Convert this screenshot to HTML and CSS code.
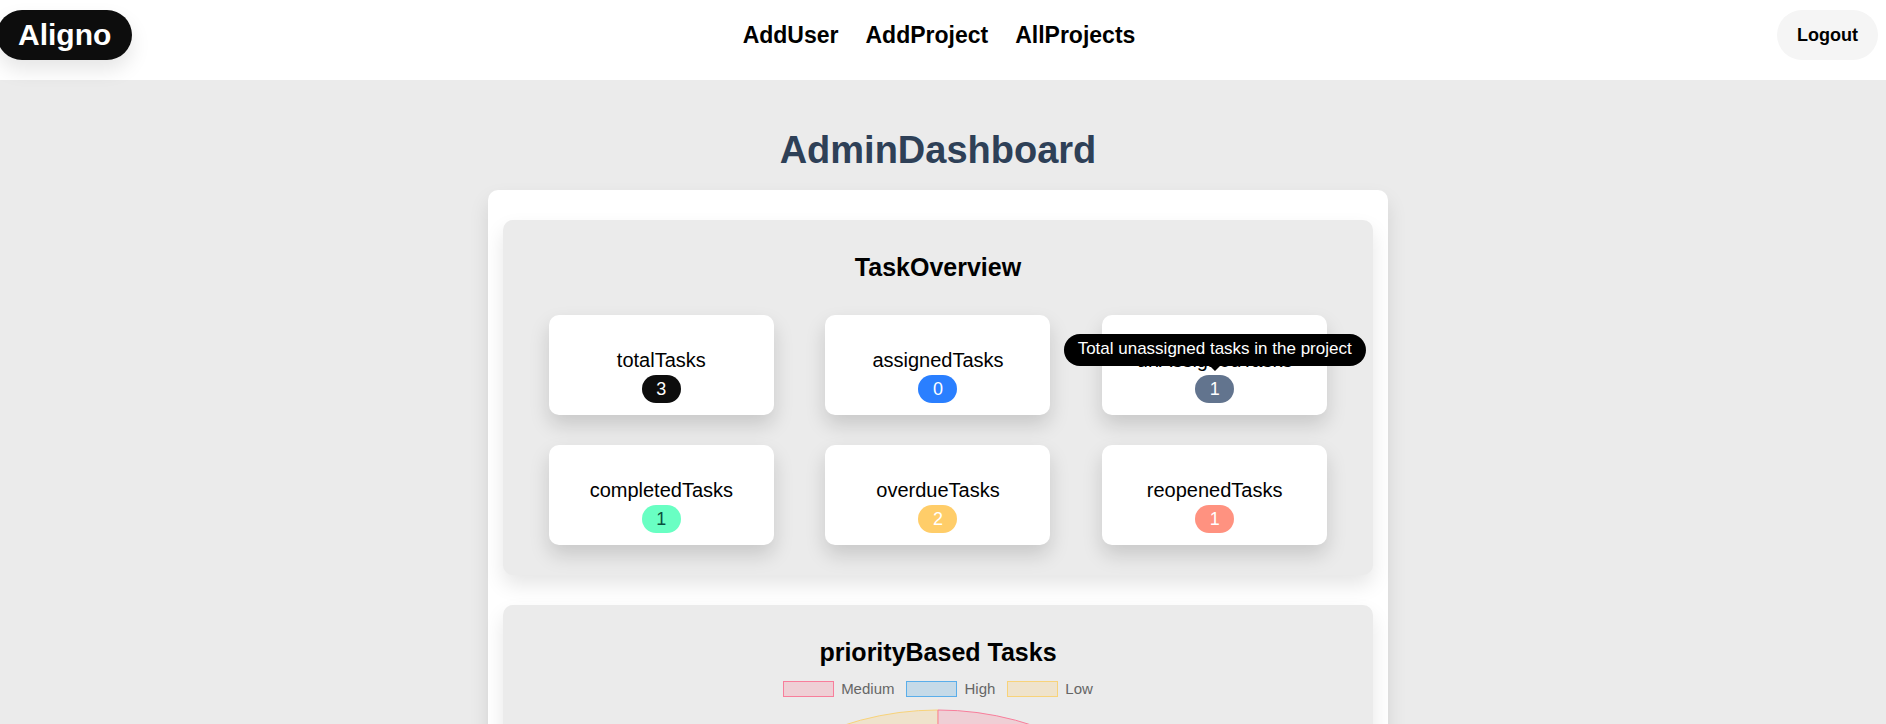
FILE: index.html
```html
<!DOCTYPE html>
<html lang="en">
<head>
<meta charset="utf-8">
<meta name="viewport" content="width=device-width, initial-scale=1">
<title>Aligno</title>
<link rel="stylesheet" href="styles.css">
</head>
<body>
<header class="topbar">
  <a class="logo" href="#">Aligno</a>
  <nav class="nav">
    <a href="#">AddUser</a>
    <a href="#">AddProject</a>
    <a href="#">AllProjects</a>
  </nav>
  <button class="logout" type="button">Logout</button>
</header>
<main class="page">
  <h1 class="page-title">AdminDashboard</h1>
  <div class="panel">
    <section class="section">
      <h2 class="section-title">TaskOverview</h2>
      <div class="cards">
        <div class="card"><p class="card-label">totalTasks</p><span class="badge badge-total">3</span></div>
        <div class="card"><p class="card-label">assignedTasks</p><span class="badge badge-assigned">0</span></div>
        <div class="card"><p class="card-label">unAssignedTasks</p><span class="badge badge-unassigned" aria-describedby="unassigned-tip">1<span class="tooltip" id="unassigned-tip" role="tooltip">Total unassigned tasks in the project</span></span></div>
        <div class="card"><p class="card-label">completedTasks</p><span class="badge badge-completed">1</span></div>
        <div class="card"><p class="card-label">overdueTasks</p><span class="badge badge-overdue">2</span></div>
        <div class="card"><p class="card-label">reopenedTasks</p><span class="badge badge-reopened">1</span></div>
      </div>
    </section>
    <section class="section section-chart">
      <h2 class="section-title">priorityBased Tasks</h2>
      <ul class="legend">
        <li><span class="swatch swatch-medium"></span>Medium</li>
        <li><span class="swatch swatch-high"></span>High</li>
        <li><span class="swatch swatch-low"></span>Low</li>
      </ul>
      <svg class="pie" viewBox="0 0 600 600" role="img" aria-label="Tasks by priority">
        <path class="slice-low" d="M300 300 L41 449.500 A299 299 0 0 1 300 1 Z"/>
        <path class="slice-high" d="M300 300 L559 449.500 A299 299 0 0 1 41 449.500 Z"/>
        <path class="slice-medium" d="M300 300 L300 1 A299 299 0 0 1 559 449.500 Z"/>
      </svg>
    </section>
  </div>
</main>
</body>
</html>
```
FILE: styles.css
```css
* {
  box-sizing: border-box;
}

body {
  margin: 0;
  background: #ebebeb;
  color: #000;
  font-family: "Liberation Sans", Arial, sans-serif;
}

h1, h2, p, ul {
  margin: 0;
  padding: 0;
}

.topbar {
  display: grid;
  grid-template-columns: 1fr auto 1fr;
  align-items: start;
  height: 80px;
  padding: 10px 8px 0 0;
  background: #fff;
}

.logo {
  justify-self: start;
  margin-left: -3px;
  padding: 0 21px;
  border-radius: 25px;
  background: #0d0d0d;
  box-shadow: 0 10px 20px rgba(0, 0, 0, 0.1);
  color: #fff;
  font-size: 30px;
  font-weight: 700;
  line-height: 50px;
  text-decoration: none;
}

.nav {
  display: flex;
  gap: 27px;
}

.nav a {
  color: #000;
  font-size: 23px;
  font-weight: 700;
  line-height: 50px;
  text-decoration: none;
}

.logout {
  justify-self: end;
  height: 50px;
  padding: 0 20px;
  border: 0;
  border-radius: 25px;
  background: #f5f5f5;
  color: #000;
  font-family: inherit;
  font-size: 18px;
  font-weight: 700;
}

.page {
  padding: 50px 10px 50px 0;
}

.page-title {
  margin-bottom: 20px;
  color: #2e4057;
  font-size: 38px;
  line-height: 40px;
  text-align: center;
}

.panel {
  display: grid;
  gap: 30px;
  max-width: 900px;
  margin: 0 auto;
  padding: 30px 15px;
  border-radius: 10px;
  background: #fff;
  box-shadow: 0 10px 20px rgba(0, 0, 0, 0.1);
}

.section {
  padding: 30px 20px;
  border-radius: 10px;
  background: #ebebeb;
  box-shadow: 0 10px 20px rgba(0, 0, 0, 0.1);
  text-align: center;
}

.section-title {
  font-size: 25px;
  line-height: 35px;
}

.cards {
  display: grid;
  grid-template-columns: repeat(3, 1fr);
  gap: 30px 0;
  justify-items: center;
  margin-top: 30px;
}

.card {
  width: 225px;
  padding: 30px 0 12px;
  border-radius: 10px;
  background: #fff;
  box-shadow: 0 10px 20px rgba(0, 0, 0, 0.15);
}

.card-label {
  font-size: 20px;
  line-height: 30px;
}

.badge {
  display: block;
  position: relative;
  width: 39px;
  margin: 0 auto;
  border-radius: 14px;
  color: #fff;
  font-size: 18px;
  line-height: 28px;
}

.badge-total { background: #0d0d0d; }
.badge-assigned { background: #2a7fff; }
.badge-unassigned { background: #62748e; }
.badge-completed { background: #69ffc3; color: #0b4f3f; }
.badge-overdue { background: #ffcd69; }
.badge-reopened { background: #ff9280; }

.tooltip {
  position: absolute;
  bottom: 37px;
  left: 50%;
  padding: 4px 14px 6px;
  border-radius: 16px;
  background: #000;
  color: #fff;
  font-size: 17px;
  line-height: 22px;
  white-space: nowrap;
  transform: translateX(-50%);
}

.tooltip::after {
  content: "";
  position: absolute;
  top: 100%;
  left: 50%;
  border: 5px solid transparent;
  border-top-color: #000;
  transform: translateX(-50%);
}

.legend {
  display: flex;
  justify-content: center;
  gap: 12px;
  margin-top: 9px;
  color: #666;
  font-size: 15px;
  line-height: 20px;
  list-style: none;
}

.legend li {
  display: flex;
  align-items: center;
  gap: 7px;
}

.swatch {
  width: 51px;
  height: 16px;
  border: 1px solid;
}

.swatch-medium { border-color: #f87e9b; background: #efcfd5; }
.swatch-high { border-color: #5aaeea; background: #c5dae8; }
.swatch-low { border-color: #f8d37a; background: #efe3cc; }

.pie {
  display: block;
  width: 100%;
  max-width: 600px;
  margin: 10px auto 0;
  stroke-width: 1;
}

.slice-medium { fill: #efcfd5; stroke: #f87e9b; }
.slice-high { fill: #c5dae8; stroke: #5aaeea; }
.slice-low { fill: #efe3cc; stroke: #f8d37a; }
```
